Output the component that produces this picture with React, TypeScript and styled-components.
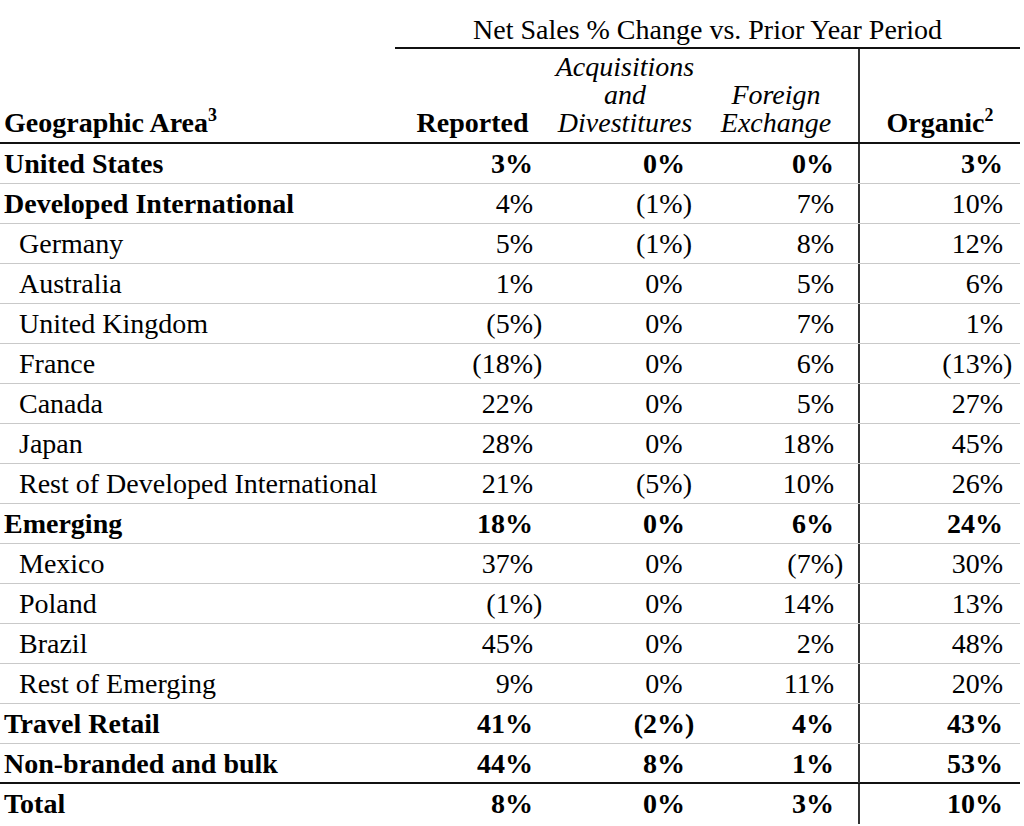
import React from "react";
import styled, { createGlobalStyle } from "styled-components";

const GlobalStyle = createGlobalStyle`
  html, body {
    margin: 0;
    padding: 0;
    background: #ffffff;
  }
  body {
    font-family: "Liberation Serif", "Times New Roman", serif;
    color: #000000;
    font-size: 28px;
  }
`;

const COLS = "395px 155px 150px 158px 162px";

const Table = styled.div`
  width: 1020px;
  display: flex;
  flex-direction: column;
`;

const GroupHead = styled.div`
  margin-left: 395px;
  padding: 16px 0 3px;
  line-height: 28px;
  text-align: center;
  border-bottom: 2px solid #111;
`;

const HeadRow = styled.div`
  display: grid;
  grid-template-columns: ${COLS};
  align-items: end;
  border-bottom: 2px solid #111;
`;

const HeadCell = styled.div<{ $italic?: boolean; $bold?: boolean; $left?: boolean; $rule?: boolean; $shift?: number }>`
  padding: 4px ${(p) => (p.$shift ? p.$shift : 0)}px 5px ${(p) => (p.$left ? 4 : 0)}px;
  line-height: 28px;
  text-align: ${(p) => (p.$left ? "left" : "center")};
  font-style: ${(p) => (p.$italic ? "italic" : "normal")};
  font-weight: ${(p) => (p.$bold ? 700 : 400)};
  align-self: stretch;
  display: flex;
  flex-direction: column;
  justify-content: flex-end;
  border-left: ${(p) => (p.$rule ? "2px solid #333" : "none")};
`;

const Sup = styled.span`
  font-size: 0.64em;
  position: relative;
  top: -0.6em;
  line-height: 0;
`;

const Row = styled.div<{ $bold?: boolean; $last?: boolean; $strong?: boolean }>`
  display: grid;
  grid-template-columns: ${COLS};
  height: 40px;
  box-sizing: border-box;
  line-height: 39px;
  font-weight: ${(p) => (p.$bold ? 700 : 400)};
  border-bottom: ${(p) =>
    p.$last ? "none" : p.$strong ? "2px solid #111" : "1px solid #c9c9c9"};
`;

const Label = styled.div<{ $indent?: boolean; $bold?: boolean }>`
  padding-left: ${(p) => (p.$indent ? 19 : 4)}px;
  font-weight: ${(p) => (p.$bold ? 700 : "inherit")};
  white-space: nowrap;
`;

type Align = "right" | "center";

const Value = styled.div<{ $align: Align; $padL?: number; $padR?: number; $rule?: boolean }>`
  text-align: ${(p) => p.$align};
  padding-left: ${(p) => p.$padL ?? 0}px;
  padding-right: ${(p) => p.$padR ?? 0}px;
  white-space: nowrap;
  border-left: ${(p) => (p.$rule ? "2px solid #333" : "none")};
`;

const Num = styled.span<{ $hang?: boolean }>`
  display: inline-block;
  margin-right: ${(p) => (p.$hang ? "-0.333em" : "0")};
`;

type Line = {
  label: string;
  indent?: boolean;
  labelBold?: boolean;
  bold?: boolean;
  v: [string, string, string, string];
};

const rows: Line[] = [
  { label: "United States", labelBold: true, bold: true, v: ["3%", "0%", "0%", "3%"] },
  { label: "Developed International", labelBold: true, v: ["4%", "(1%)", "7%", "10%"] },
  { label: "Germany", indent: true, v: ["5%", "(1%)", "8%", "12%"] },
  { label: "Australia", indent: true, v: ["1%", "0%", "5%", "6%"] },
  { label: "United Kingdom", indent: true, v: ["(5%)", "0%", "7%", "1%"] },
  { label: "France", indent: true, v: ["(18%)", "0%", "6%", "(13%)"] },
  { label: "Canada", indent: true, v: ["22%", "0%", "5%", "27%"] },
  { label: "Japan", indent: true, v: ["28%", "0%", "18%", "45%"] },
  { label: "Rest of Developed International", indent: true, v: ["21%", "(5%)", "10%", "26%"] },
  { label: "Emerging", labelBold: true, bold: true, v: ["18%", "0%", "6%", "24%"] },
  { label: "Mexico", indent: true, v: ["37%", "0%", "(7%)", "30%"] },
  { label: "Poland", indent: true, v: ["(1%)", "0%", "14%", "13%"] },
  { label: "Brazil", indent: true, v: ["45%", "0%", "2%", "48%"] },
  { label: "Rest of Emerging", indent: true, v: ["9%", "0%", "11%", "20%"] },
  { label: "Travel Retail", labelBold: true, bold: true, v: ["41%", "(2%)", "4%", "43%"] },
  { label: "Non-branded and bulk", labelBold: true, bold: true, v: ["44%", "8%", "1%", "53%"] },
  { label: "Total", labelBold: true, bold: true, v: ["8%", "0%", "3%", "10%"] },
];

const isNeg = (s: string) => s.startsWith("(");

export default function App() {
  return (
    <>
      <GlobalStyle />
      <Table>
        <GroupHead>Net Sales % Change vs. Prior Year Period</GroupHead>
        <HeadRow>
          <HeadCell $bold $left>
            <span>
              Geographic Area<Sup>3</Sup>
            </span>
          </HeadCell>
          <HeadCell $bold>Reported</HeadCell>
          <HeadCell $italic>
            <span>Acquisitions</span>
            <span>and</span>
            <span>Divestitures</span>
          </HeadCell>
          <HeadCell $italic $shift={6}>
            <span>Foreign</span>
            <span>Exchange</span>
          </HeadCell>
          <HeadCell $bold $rule>
            <span>
              Organic<Sup>2</Sup>
            </span>
          </HeadCell>
        </HeadRow>
        {rows.map((r, i) => (
          <Row
            key={r.label}
            $bold={r.bold}
            $strong={i === rows.length - 2}
            $last={i === rows.length - 1}
          >
            <Label $indent={r.indent} $bold={r.labelBold}>
              {r.label}
            </Label>
            <Value $align="right" $padR={17}>
              <Num $hang={isNeg(r.v[0])}>{r.v[0]}</Num>
            </Value>
            <Value $align="center" $padL={78}>
              <Num>{r.v[1]}</Num>
            </Value>
            <Value $align="right" $padR={24}>
              <Num $hang={isNeg(r.v[2])}>{r.v[2]}</Num>
            </Value>
            <Value $align="right" $padR={17} $rule>
              <Num $hang={isNeg(r.v[3])}>{r.v[3]}</Num>
            </Value>
          </Row>
        ))}
      </Table>
    </>
  );
}
